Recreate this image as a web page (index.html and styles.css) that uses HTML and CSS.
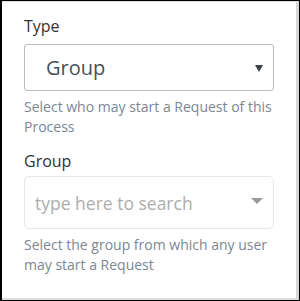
FILE: index.html
```html
<!DOCTYPE html>
<html lang="en">
  <head>
    <meta charset="UTF-8" />
    <title>Start event settings</title>
    <link rel="stylesheet" href="styles.css">
  </head>
  <body>
    <div class="frame">
      <div class="panel">
        <div class="field">
          <label class="label">Type</label>
          <div class="select">
            <span class="select-value">Group</span>
            <span class="caret-dark"></span>
          </div>
          <small class="help">Select who may start a Request of this Process</small>
        </div>
        <div class="field">
          <label class="label">Group</label>
          <div class="multiselect">
            <span class="placeholder">type here to search</span>
            <span class="caret-light"></span>
          </div>
          <small class="help">Select the group from which any user may start a Request</small>
        </div>
      </div>
    </div>
  </body>
</html>
```

FILE: styles.css
```css
html,
body {
  margin: 0;
  padding: 0;
  background: #ffffff;
}

body {
  font-family: 'Open Sans', 'Liberation Sans', sans-serif;
  color: #333;
}

.frame {
  width: 300px;
  height: 301px;
  box-sizing: border-box;
  border: 1px solid #000;
  border-left-width: 2px;
  background: #fff;
}

.panel {
  height: 100%;
  box-sizing: border-box;
  border-top: 1px solid #dcdcdc;
  border-bottom: 2px solid #dcdcdc;
  border-right: 3px solid #d6d6d6;
  padding: 13px 22px 0 22px;
}

.field {
  display: flex;
  flex-direction: column;
}

.field + .field {
  margin-top: 13px;
}

.label {
  font-size: 16px;
  line-height: 22px;
  color: #333;
  margin-bottom: 7px;
}

.select {
  height: 47px;
  box-sizing: border-box;
  border: 1px solid #b4bcc4;
  border-radius: 3px;
  display: flex;
  align-items: center;
  justify-content: space-between;
  padding: 0 10px 0 21px;
}

.select-value {
  font-size: 20px;
  color: #495057;
}

.caret-dark {
  width: 0;
  height: 0;
  border-left: 4px solid transparent;
  border-right: 4px solid transparent;
  border-top: 7px solid #3d4146;
  margin-top: 2px;
}

.multiselect {
  height: 53px;
  box-sizing: border-box;
  border: 1px solid #e8e8e8;
  border-radius: 5px;
  display: flex;
  align-items: center;
  justify-content: space-between;
  padding: 0 10px 0 10px;
  margin-top: -3px;
}

.placeholder {
  font-size: 17.5px;
  color: #adadad;
}

.caret-light {
  width: 0;
  height: 0;
  border-left: 6px solid transparent;
  border-right: 6px solid transparent;
  border-top: 6px solid #999;
  margin-bottom: 3px;
}

.help {
  font-size: 14px;
  line-height: 20px;
  color: #7b8794;
  margin-top: 6px;
}
```
